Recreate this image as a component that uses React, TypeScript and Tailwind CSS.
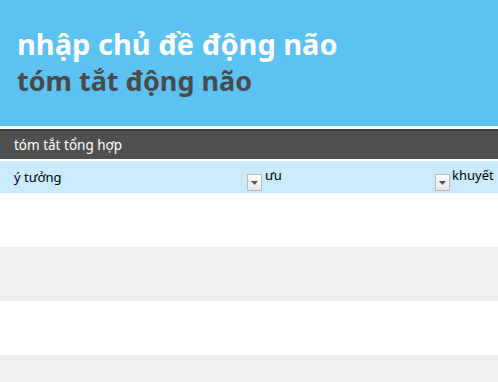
import React from 'react';

function FilterButton() {
    return (
        <span className="flex h-[17px] w-[15px] shrink-0 items-center justify-center border border-[#b9b9b9] bg-gradient-to-b from-white to-[#e9e9e9]">
            <svg width="7" height="4" viewBox="0 0 7 4">
                <path d="M0 0h7L3.5 4z" fill="#555" />
            </svg>
        </span>
    );
}

export default function App() {
    const rows = ['bg-white', 'bg-[#efefef]', 'bg-white', 'bg-[#efefef]'];

    return (
        <div className="h-[382px] w-[498px] overflow-hidden bg-white font-['Noto_Sans',sans-serif]">
            <div className="h-[126px] bg-[#5bc2f2] px-[17px] pt-[25px]">
                <h1 className="text-[29px] font-bold leading-[37px] text-white">nhập chủ đề động não</h1>
                <h2 className="text-[27px] font-bold leading-[37px] text-[#4a4a4a]">tóm tắt động não</h2>
            </div>
            <div className="h-[3px] bg-white" />
            <div className="flex h-[30px] items-center border-t-2 border-[#3f3f3f] bg-[#505050] px-[14px] text-[13.5px] text-white">
                tóm tắt tổng hợp
            </div>
            <div className="h-[2px] bg-white" />
            <div className="grid h-[32px] grid-cols-[263px_188px_1fr] bg-[#c9ebfb] text-[13px] text-black">
                <div className="flex items-center justify-between pb-[2px] pl-[14px] pr-[1px]">
                    <span className="mt-[3px]">ý tưởng</span>
                    <span className="mt-[13px]"><FilterButton /></span>
                </div>
                <div className="flex items-start justify-between pr-[1px]">
                    <span className="pl-[2px] pt-[5px]">ưu</span>
                    <span className="mt-[13px]"><FilterButton /></span>
                </div>
                <div className="flex items-start">
                    <span className="pl-[1px] pt-[5px] whitespace-nowrap">khuyết</span>
                </div>
            </div>
            {rows.map((bg, i) => (
                <div key={i} className={`h-[54px] ${bg}`} />
            ))}
        </div>
    );
}
